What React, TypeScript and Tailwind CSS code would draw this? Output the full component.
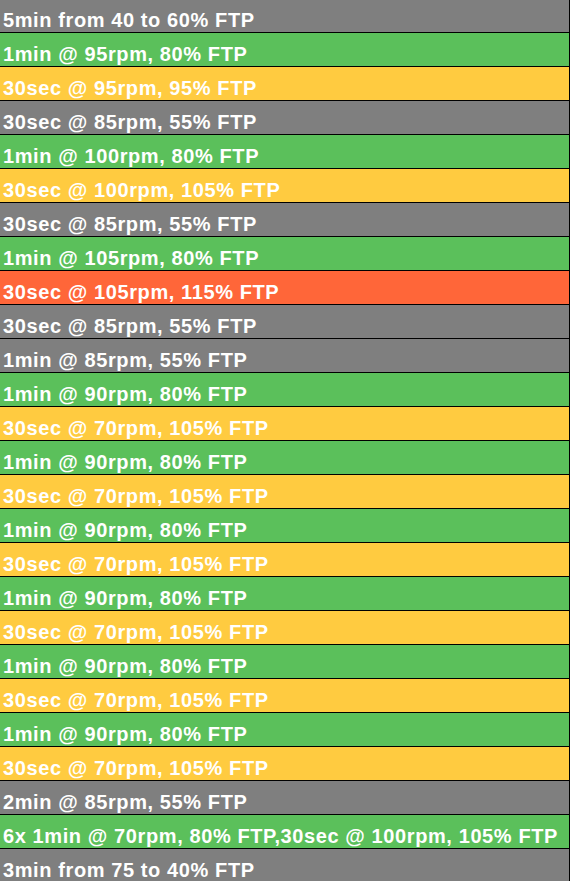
const GRAY = "bg-[#7f7f7f]";
const GREEN = "bg-[#5bc05b]";
const YELLOW = "bg-[#ffcb40]";
const RED = "bg-[#ff6639]";

type Step = {
  label: string;
  color: string;
};

const steps: Step[] = [
  { label: "5min from 40 to 60% FTP", color: GRAY },
  { label: "1min @ 95rpm, 80% FTP", color: GREEN },
  { label: "30sec @ 95rpm, 95% FTP", color: YELLOW },
  { label: "30sec @ 85rpm, 55% FTP", color: GRAY },
  { label: "1min @ 100rpm, 80% FTP", color: GREEN },
  { label: "30sec @ 100rpm, 105% FTP", color: YELLOW },
  { label: "30sec @ 85rpm, 55% FTP", color: GRAY },
  { label: "1min @ 105rpm, 80% FTP", color: GREEN },
  { label: "30sec @ 105rpm, 115% FTP", color: RED },
  { label: "30sec @ 85rpm, 55% FTP", color: GRAY },
  { label: "1min @ 85rpm, 55% FTP", color: GRAY },
  { label: "1min @ 90rpm, 80% FTP", color: GREEN },
  { label: "30sec @ 70rpm, 105% FTP", color: YELLOW },
  { label: "1min @ 90rpm, 80% FTP", color: GREEN },
  { label: "30sec @ 70rpm, 105% FTP", color: YELLOW },
  { label: "1min @ 90rpm, 80% FTP", color: GREEN },
  { label: "30sec @ 70rpm, 105% FTP", color: YELLOW },
  { label: "1min @ 90rpm, 80% FTP", color: GREEN },
  { label: "30sec @ 70rpm, 105% FTP", color: YELLOW },
  { label: "1min @ 90rpm, 80% FTP", color: GREEN },
  { label: "30sec @ 70rpm, 105% FTP", color: YELLOW },
  { label: "1min @ 90rpm, 80% FTP", color: GREEN },
  { label: "30sec @ 70rpm, 105% FTP", color: YELLOW },
  { label: "2min @ 85rpm, 55% FTP", color: GRAY },
  { label: "6x 1min @ 70rpm, 80% FTP,30sec @ 100rpm, 105% FTP", color: GREEN },
  { label: "3min from 75 to 40% FTP", color: GRAY },
];

const App = () => {
  return (
    <div className="h-[881px] w-[570px] overflow-hidden bg-white">
      <div className="-mt-px flex flex-col">
        {steps.map((step, i) => (
          <div
            key={i}
            className={`h-[34px] shrink-0 border-b border-r border-black pl-[3px] pt-[11px] text-[20px] font-bold leading-[20px] tracking-[0.6px] whitespace-nowrap text-white ${step.color}`}
            style={{ fontFamily: '"Liberation Sans", Arial, sans-serif' }}
          >
            {step.label}
          </div>
        ))}
      </div>
    </div>
  );
};

export default App;
